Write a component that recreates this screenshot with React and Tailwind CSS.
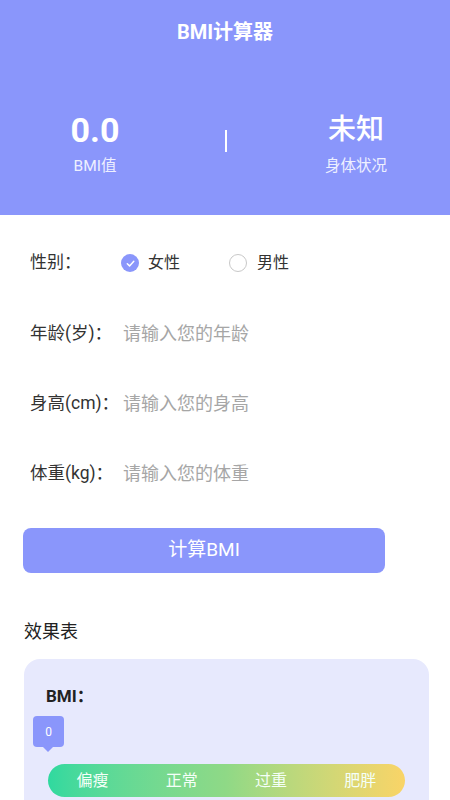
import React from "react";

const font = { fontFamily: '"Roboto", "Noto Sans CJK SC", sans-serif' };

function Row({ label, placeholder }) {
  return (
    <div className="flex items-center h-[70px] pl-[30px]">
      <span className="text-[#333333] text-[17.5px] w-[93px] shrink-0">{label}</span>
      <input
        className="outline-none bg-transparent text-[18px] placeholder:text-[#a6a6a6] w-[250px]"
        placeholder={placeholder}
      />
    </div>
  );
}

export default function App() {
  return (
    <div className="w-[450px] h-[800px] overflow-hidden bg-white" style={font}>
      <div className="bg-[#8a96fb] h-[215px] text-white flex flex-col">
        <div className="h-[64px] flex items-center justify-center text-[20px] font-bold">
          BMI计算器
        </div>
        <div className="grid grid-cols-[190px_72px_188px] mt-[44px]">
          <div className="flex flex-col items-center">
            <div className="text-[34px] font-bold leading-[44px]">0.0</div>
            <div className="text-[15.5px] leading-[20px] mt-[4px] text-[#eef0ff]">BMI值</div>
          </div>
          <div className="flex justify-center pt-[22px]">
            <div className="w-[2px] h-[22px] bg-white" />
          </div>
          <div className="flex flex-col items-center">
            <div className="text-[28px] font-medium leading-[44px]">未知</div>
            <div className="text-[15.5px] leading-[20px] mt-[4px] text-[#eef0ff]">身体状况</div>
          </div>
        </div>
      </div>

      <div className="pt-[13px]">
        <div className="flex items-center h-[70px] pl-[30px] text-[#333333]">
          <span className="w-[91px] shrink-0 text-[17px]">性别：</span>
          <span className="w-[18px] h-[18px] rounded-full bg-[#8a96fb] flex items-center justify-center">
            <svg width="11" height="11" viewBox="0 0 12 12" fill="none">
              <path d="M2.5 6.2 L5 8.6 L9.6 3.6" stroke="white" strokeWidth="1.6" strokeLinecap="round" strokeLinejoin="round" />
            </svg>
          </span>
          <span className="ml-[9px] w-[81px] text-[16px]">女性</span>
          <span className="w-[18px] h-[18px] rounded-full border border-[#c8c8c8]" />
          <span className="ml-[10px] text-[16px]">男性</span>
        </div>
        <Row label="年龄(岁)：" placeholder="请输入您的年龄" />
        <Row label="身高(cm)：" placeholder="请输入您的身高" />
        <Row label="体重(kg)：" placeholder="请输入您的体重" />
      </div>

      <div className="px-[23px] mt-[20px]">
        <button className="w-[362px] h-[45px] rounded-[8px] bg-[#8a96fb] text-white text-[19px]">
          计算BMI
        </button>
      </div>

      <div className="px-[24px] mt-[45px] text-[18px] text-[#222222] leading-[28px]">效果表</div>

      <div className="mx-[24px] mt-[13px] w-[405px] h-[200px] rounded-[16px] bg-[#e7e9fd] pt-[24px]">
        <div className="pl-[22px] text-[17px] font-bold text-[#222222] leading-[26px]">BMI：</div>
        <div className="relative ml-[9px] mt-[7px] w-[31px] h-[31px] rounded-[4px] bg-[#8a96fb] text-white text-[12px] flex items-center justify-center">
          0
          <div className="absolute left-[10px] -bottom-[5px] w-0 h-0 border-l-[5px] border-r-[5px] border-t-[5px] border-l-transparent border-r-transparent border-t-[#8a96fb]" />
        </div>
        <div className="ml-[24px] mt-[17px] w-[357px] h-[33px] rounded-full bg-gradient-to-r from-[#2fd99f] via-[#8fd986] to-[#f9d467] grid grid-cols-4 items-center text-[#f4fff8] text-[16px] text-center">
          <span>偏瘦</span>
          <span>正常</span>
          <span>过重</span>
          <span>肥胖</span>
        </div>
      </div>
    </div>
  );
}
